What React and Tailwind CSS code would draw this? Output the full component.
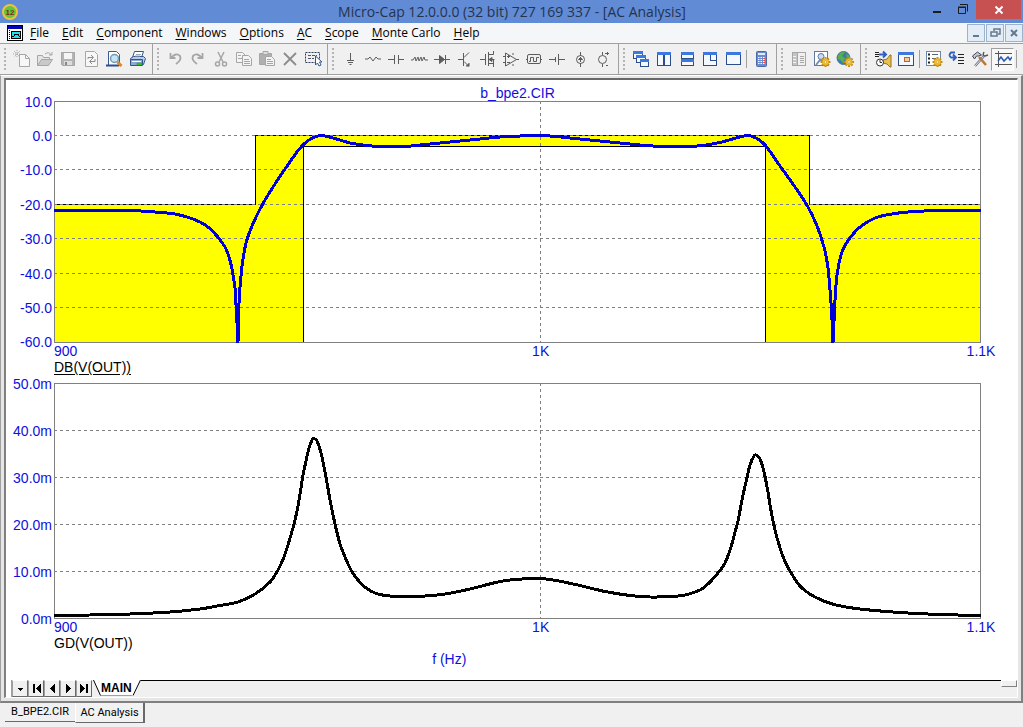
import React, { useState } from 'react'

const MENUS = ['File', 'Edit', 'Component', 'Windows', 'Options', 'AC', 'Scope', 'Monte Carlo', 'Help']

// 18x18 drawings for the tool bar
const G = '#a6a6a6'
const D = '#5c5c5c'
const B = '#2f5fc0'
const gear = (x, y) => (
  <g stroke="#c08c14" fill="#f5c63c">
    <path d={`M${x - 5} ${y}h10M${x} ${y - 5}v10M${x - 3.5} ${y - 3.5}l7 7M${x + 3.5} ${y - 3.5}l-7 7`} strokeWidth="2" />
    <circle cx={x} cy={y} r="3.2" stroke="#e0a820" strokeWidth="1" />
    <circle cx={x} cy={y} r="1.3" fill="#fff8dc" strokeWidth=".6" />
  </g>
)
const win = (x, y, w, h) => (
  <g shapeRendering="crispEdges">
    <rect x={x + 0.5} y={y + 0.5} width={w - 1} height={h - 1} fill="#f4f8ff" stroke="#2c4c8c" />
    <path d={`M${x} ${y + 1.5}h${w}`} stroke="#3c78e0" strokeWidth="3" />
  </g>
)

const ICONS = {
  New: <g stroke={G} fill="#f7f7f7"><path d="M6.5 4.5h6l4 4v8h-10z" /><path d="M12.5 4.5v4h4" fill="none" /><path d="M1 1l6 6M7 1L1 7M4 0v8M0 4h8" strokeDasharray="1 1" fill="none" /></g>,
  Open: <g stroke={G} fill="#e4e4e4"><path d="M1.5 15.5v-10h5l1 2h6v3" /><path d="M1.5 15.5l4-6h11l-4 6z" fill="#c9c9c9" /><path d="M9 4q4-3 6 1M16 2v3h-3" fill="none" /></g>,
  Save: <g stroke={G} fill="#b4b4b4"><path d="M2.5 2.5h13v13h-12l-1-1z" /><rect x="5" y="3" width="8" height="6" fill="#f5f5f5" stroke="none" /><rect x="5" y="11" width="8" height="4" fill="#dcdcdc" stroke="none" /><rect x="6" y="12" width="2" height="3" fill="#888" stroke="none" /></g>,
  Revert: <g stroke={G} fill="#f7f7f7"><path d="M3.5 1.5h9l3 3v12h-12z" /><path d="M6 9V7.5h5M9 5l2.5 2.5L9 10M13 9v2.5H8M10 9l-2.5 2.5L10 14" fill="none" stroke="#8c8c8c" /></g>,
  Preview: <g><path d="M3.5 1.5h8l3 3v11h-11z" fill="#fff" stroke="#3a5a96" /><path d="M1 15.5h13" stroke="#2c4c8c" strokeWidth="2" /><circle cx="9.5" cy="8.5" r="4" fill="#c4e4f8" stroke="#7c98ac" strokeWidth="1.5" /><path d="M12.5 12l4 4" stroke="#d88a2c" strokeWidth="3" /></g>,
  Print: <g stroke="#34548c"><path d="M6.5 1.5h9l-2 6h-9z" fill="#fff" /><path d="M2.5 8.5l3-2h10l2 2-2 6h-13z" fill="#b8cce8" /><path d="M2.5 9.5h12v6h-12z" fill="#8ca8d0" /><path d="M4 11.5h9" stroke="#fff" /><path d="M8 4.500h5M7 6h5" stroke="#9ab" /><path d="M9 13h5v2H9z" fill="#30d030" stroke="#208c20" strokeWidth=".5" /></g>,
  Undo: <path d="M4.5 3v5h5M5 8q5-6 9-2 2 4-4 8" fill="none" stroke={G} strokeWidth="1.8" />,
  Redo: <path d="M13.5 3v5h-5M13 8Q8 2 4 6q-2 4 4 8" fill="none" stroke={G} strokeWidth="1.8" />,
  Cut: <g fill="none" stroke={G} strokeWidth="1.5"><path d="M6 2l5 10M12 2L7 12" /><circle cx="5.5" cy="14" r="2" /><circle cx="12.5" cy="14" r="2" /></g>,
  Copy: <g stroke={G} fill="#f4f4f4"><path d="M1.5 2.5h6l3 3v7h-9z" /><path d="M7.5 5.5h6l3 3v7h-9z" /><path d="M3 5.5h3M3 8.5h4M9 9.5h5M9 11.5h6M9 13.5h6" /></g>,
  Paste: <g stroke={G}><path d="M1.5 3.5h12v11h-12z" fill="#b0b0b0" /><path d="M5 1.5h5v3H5z" fill="#ddd" /><path d="M7.5 6.5h6l3 3v6h-9z" fill="#f4f4f4" /><path d="M9 9.5h4M9 11.5h6M9 13.5h6" /></g>,
  Delete: <path d="M3 3l12 12M15 3L3 15" stroke="#8c8c8c" strokeWidth="1.8" />,
  Select: <g><path d="M1.5 2.5h14v10h-14z" fill="none" stroke="#2c3c5c" strokeDasharray="2 1" /><path d="M4 5.5h9M4 8.5h6" stroke="#556" strokeDasharray="3 1" /><path d="M11.5 6v9l2-2 1.500 3 2-1-1.500-3h2.500z" fill="#fff" stroke="#34548c" /></g>,
  Ground: <path d="M9.5 3v7M6 10.5h7M7 12.5h5M8.5 14.5h2" stroke={D} />,
  Resistor: <path d="M1 9h3l2-2 3 4 3-4 2 2h3" fill="none" stroke={D} />,
  Capacitor: <path d="M1 9.5h6.5M7.5 5v9M11.5 5v9M11.5 9.5H17" fill="none" stroke={D} />,
  Inductor: <path d="M1 10h2l2-3 1 4 2-4 1 4 2-4 1 4 2-4 1 3h3" fill="none" stroke={D} />,
  Diode: <g stroke={D}><path d="M1 9.5h16M12.5 5v9" /><path d="M6.5 5.5v8l5-4z" fill={D} /></g>,
  Bipolar: <g stroke={D} fill="none"><path d="M2 9.5h5M7.5 3v13M8 7.5l5-5M8 11.5l5 5" /><path d="M10 16h3v-3" fill={D} /></g>,
  Mosfet: <g stroke={D} fill="none"><path d="M1 9.5h5M6.5 4v11M9.5 2v14M9.5 4.5h5V1M9.5 9.5h6M9.5 13.5h5V17M14.5 9v5" /><path d="M10 9.5l3-2v4z" fill={D} /></g>,
  Opamp: <g stroke={D} fill="none"><path d="M3.5 3v13l11-6.5zM14 9.5h3M1 6.5h3M1 12.5h3" /><path d="M5 6.5h3M6.5 5v3M5 12.5h3M11 5V3M11 14v2" /></g>,
  Pulse: <g stroke={D} fill="none"><rect x="2.5" y="4.5" width="13" height="9" rx="1.5" /><path d="M1 9.5h2M15 9.5h2M4 11.5h1.5v-4h3v4h3v-4H14" /></g>,
  Battery: <path d="M1 9.5h6.5M7.5 7v5M10.5 4v11M10.5 9.5H17" fill="none" stroke={D} />,
  Isource: <g stroke={D} fill="none"><circle cx="9.5" cy="9.5" r="4" /><path d="M9.5 2v4M9.5 13v4M9.5 7v5" /><path d="M7.5 9.5l2-2 2 2z" fill={D} /></g>,
  Vsource: <g stroke={D} fill="none"><circle cx="8.5" cy="9.5" r="4" /><path d="M8.5 2v3M8.5 14v3M11 3.5h4M13.5 2v3M12 15.5h2" /></g>,
  Cascade: <g>{win(1, 1, 10, 8)}{win(4, 5, 10, 8)}{win(8, 9, 9, 8)}</g>,
  'Tile vertical': <g>{win(2, 2, 7, 14)}{win(9, 2, 7, 14)}</g>,
  'Tile horizontal': <g>{win(3, 2, 13, 7)}{win(3, 9, 13, 7)}</g>,
  Overlap: <g>{win(2, 2, 14, 14)}{win(9, 2, 7, 9)}</g>,
  Maximize: win(2, 2, 15, 13),
  Calculator: <g><rect x="4.5" y="1.5" width="10" height="15" rx="1" fill="#6c8cd0" stroke="#4c68a8" /><path d="M6 4h7" stroke="#dcecff" strokeWidth="2" /><path d="M6 7.5h7M6 9.5h7M6 11.5h7M6 13.5h7" stroke="#fff" strokeDasharray="1.5 1" /><path d="M12.500 8v6" stroke="#e04848" strokeDasharray="1 1" /></g>,
  Panel: <g stroke={G} fill="#f0f0f0"><rect x="2.5" y="2.5" width="13" height="13" /><path d="M3 3h4v12H3z" fill="#c4c4c4" stroke="none" /><path d="M7.5 3v12" /><path d="M3 6.5h3M3 9.5h3M3 12.5h3" stroke="#f4f4f4" /><path d="M10 6.5h4M10 8.5h4M10 10.5h4M10 12.5h4" /></g>,
  'Component editor': <g><rect x="1.5" y="1.5" width="13" height="14" fill="#fff" stroke="#667898" /><circle cx="8" cy="6.500" r="3" fill="#c8daf4" stroke="#5878a8" /><path d="M3 15l4-5 3 1" fill="none" stroke="#7a90b0" strokeWidth="2" />{gear(12.500, 12)}</g>,
  Web: <g><circle cx="7.5" cy="8" r="6.500" fill="#3c78b8" stroke="#4c7890" /><path d="M2 6q3-5 7-4l-3 4 3 2-2 6q-1-4-5-5zM10 4l4 2-3 3z" fill="#58b048" />{gear(13, 12)}</g>,
  Stepping: <g><path d="M1 2.5h4M1 4.500h4M1 6.5h4" stroke="#222" /><path d="M5 4.500h6M9 1.500l3 3-3 3" fill="none" stroke={B} strokeWidth="2" /><path d="M9 10l4-1 3-4h1v12h-1l-3-3-4-1z" fill="#e8c050" stroke="#987020" /><circle cx="6" cy="12.500" r="3.500" fill="#fff" stroke="#333" /><path d="M6 10v2.500h2" fill="none" stroke="#333" /></g>,
  'Analysis window': <g>{win(1, 2, 16, 14)}<rect x="7.5" y="7.5" width="5" height="4" fill="#f8c8a0" stroke="#b06838" /></g>,
  Limits: <g><rect x="1.5" y="1.5" width="14" height="14" fill="#fff" stroke="#6c86b0" /><path d="M3 4.5h2M3 8.5h2M3 12.5h2" stroke="#222" strokeWidth="2" /><path d="M7 4.5h6M7 8.5h4" stroke="#567" />{gear(12.5, 12)}</g>,
  'State variables': <g><path d="M7 2.500H3q-3 3 0 5h4M5 4.500l3 3-3 3" fill="none" stroke={B} strokeWidth="1.800" /><path d="M10 4.5h6M10 7.5h6M10 10.5h6M10 13.5h6" stroke="#222" /></g>,
  Properties: <g fill="none"><path d="M4 16L13 6" stroke="#6c7888" strokeWidth="2.500" /><path d="M4 16L13 6" stroke="#dce4ec" /><path d="M13 2q-2 4 1 4l3-1" stroke="#556" strokeWidth="1.5" /><path d="M8 7l7 8" stroke="#b87838" strokeWidth="2.5" /><path d="M1.500 6l5-4 4 3-3 1-2 0-2 3z" fill="#c4ccd8" stroke="#445" /></g>,
  Scope: <g fill="none"><path d="M4.5 1v16M1 3.5h17M1 14.5h17" stroke="#555" /><path d="M4 11l3-4 3 4 4-4 2 3 2-3" stroke="#2858b8" strokeWidth="1.5" /></g>,
}

const GROUPS = [
  ['New', 'Open', 'Save', 'Revert', 'Preview', 'Print'],
  ['Undo', 'Redo', 'Cut', 'Copy', 'Paste', 'Delete', 'Select'],
  ['Ground', 'Resistor', 'Capacitor', 'Inductor', 'Diode', 'Bipolar', 'Mosfet', 'Opamp', 'Pulse', 'Battery', 'Isource', 'Vsource'],
  ['Cascade', 'Tile vertical', 'Tile horizontal', 'Overlap', 'Maximize', '|', 'Calculator'],
  ['Panel', 'Component editor', 'Web'],
  ['Stepping', 'Analysis window', '|', 'Limits', 'State variables', 'Properties', 'Scope', '|'],
]

// trace samples, in plot units
const DB_TRACE = [
  [0, 109.5], [50, 109.5], [76, 109.5], [101, 111], [121, 113], [136, 117], [146, 121], [154, 126], [163, 135], [171, 146], [175, 156], [178, 168], [181, 187], [182, 204], [183, 222], [183, 241],
  [184, 241], [185, 202], [187, 175], [189, 158], [192, 142], [196, 130], [203, 114], [211, 99], [221, 83], [231, 68], [243, 51], [249, 44], [255, 39], [261, 36], [267, 34.5], [275, 36], [286, 39],
  [296, 42], [313, 44.5], [326, 45.5], [351, 45.5], [371, 43.5], [391, 41.5], [426, 38], [446, 36], [466, 35], [481, 34.5], [496, 35], [521, 37.5], [546, 40], [571, 42.5], [591, 44.5], [611, 45.5],
  [636, 45.5], [652, 44], [668, 41], [682, 37], [694, 34.5], [702, 37], [711, 44], [726, 65], [741, 86], [754, 106], [763, 125], [770, 146], [774, 167], [776, 189], [778, 219], [778, 241],
  [779, 241], [781, 199], [783, 174], [788, 151], [796, 137], [806, 126], [821, 117], [841, 112.5], [861, 110.5], [886, 109.5], [927, 109.5],
]
const GD_TRACE = [
  [0, 232.5], [36, 232], [76, 231], [116, 229], [146, 226], [166, 222.5], [184, 219], [201, 211], [216, 199], [224, 187], [230, 174], [234, 162], [240, 141], [244, 123], [247, 105], [249, 92],
  [252, 78], [255, 65], [258, 57], [260, 55.5], [263, 58], [267, 70], [272, 94], [276, 117], [281, 141], [286, 161], [291, 174], [297, 187], [304, 197], [312, 205], [321, 210], [331, 212.5], [346, 213.5],
  [371, 213], [391, 211], [416, 206], [446, 198.5], [461, 196.5], [479, 195.5], [487, 195.5], [502, 197.5], [526, 202.5], [551, 208.5], [576, 212.5], [596, 214], [618, 213.5], [631, 212], [646, 207],
  [655, 200], [664, 190], [671, 180], [677, 164], [681, 149], [684, 138], [688, 117], [692, 99], [696, 82], [700, 73], [702, 72], [706, 76], [710, 89], [714, 109], [716, 122], [721, 147], [726, 165],
  [730, 176], [736, 188], [746, 203], [761, 214], [780, 221.5], [806, 226], [846, 229.5], [886, 231.5], [927, 232.5],
]

function toPath(pts) {
  let d = `M${pts[0].join(' ')}`
  for (let i = 0; i < pts.length - 1; i++) {
    const a = pts[i - 1] || pts[i], b = pts[i], c = pts[i + 1], e = pts[i + 2] || c
    if (Math.max(b[1], c[1]) > 240) { d += `L${c.join(' ')}`; continue }
    const k = (c[0] - b[0]) / 3
    const m1 = (c[1] - a[1]) / (c[0] - a[0] || 1)
    const m2 = (e[1] - b[1]) / (e[0] - b[0] || 1)
    d += `C${b[0] + k} ${b[1] + m1 * k} ${c[0] - k} ${c[1] - m2 * k} ${c[0]} ${c[1]}`
  }
  return d
}

function Tick({ children }) {
  return <span className="flex w-0 justify-center whitespace-nowrap">{children}</span>
}

function Plot({ labels, heightClass, height, trace, color, title, underline, mask }) {
  const step = (height - 1) / (labels.length - 1)
  return (
    <div className="flex">
      <div className={`flex w-12 shrink-0 flex-col justify-between pr-[2px] text-[#0f0fe0] ${heightClass}`}>
        {labels.map(l => <span key={l} className="flex h-px items-center justify-end">{l}</span>)}
      </div>
      <div className="min-w-0 flex-1">
        <svg className={`block w-full ${heightClass}`} viewBox={`0 0 927 ${height}`} preserveAspectRatio="none" shapeRendering="crispEdges" fill="none">
          {mask && (
            <g>
              <path d="M0 103.5H201.5V34.5H755.5V103.5H927V241H711.5V45.5H249.5V241H0z" fill="#ffff00" />
              <path d="M0 103.5H201.5V34.5H755.5V103.5H927M249.5 241V45.5H711.5V241" stroke="#000" />
            </g>
          )}
          {labels.slice(1, -1).map((l, i) => (
            <path key={l} d={`M0 ${Math.floor((i + 1) * step) + 0.5}H927`} stroke="#808080" strokeDasharray="3 3" />
          ))}
          <path d={`M486.5 0V${height}`} stroke="#808080" strokeDasharray="3 3" />
          <rect x=".5" y=".5" width="926" height={height - 1} stroke="#808080" />
          <path d={toPath(trace)} stroke={color} strokeWidth="3" strokeLinejoin="round" />
        </svg>
        <div className="flex h-4 items-center text-[#0f0fe0]">
          <span className="w-0">900</span>
          <span className="w-[52.5%]" />
          <Tick>1K</Tick>
          <span className="flex-1" />
          <Tick>1.1K</Tick>
        </div>
        <div className="flex h-4 items-center text-black">
          {underline ? <u className="underline-offset-2">{title}</u> : title}
        </div>
      </div>
    </div>
  )
}

function ToolBar() {
  const [scope, setScope] = useState(true)
  return (
    <div className="flex h-8 items-stretch overflow-hidden border-y border-[#a0a0a0] bg-[#f0f0f0]">
      {GROUPS.map((g, gi) => (
        <div key={gi} className={`flex shrink-0 items-center pl-1 ${gi < GROUPS.length - 1 ? 'border-r border-[#a0a0a0]' : ''} ${gi === 1 ? 'pr-[3px]' : 'pr-1'}`}>
          <span className="mr-[3px] h-[22px] w-[3px] border-l-2 border-dotted border-[#b4b4b4]" />
          {g.map((name, i) => name === '|'
            ? <span key={i} className="mx-[2px] h-[18px] w-px bg-[#a0a0a0]" />
            : (
              <button key={i} aria-label={name} onClick={() => name === 'Scope' && setScope(s => !s)}
                className={`flex h-[23px] w-[23px] items-center justify-center ${name === 'Scope' && scope ? 'border border-[#a0a0a0] border-r-white border-b-white bg-[#f8f8f8]' : ''}`}>
                <svg width="18" height="18" viewBox="0 0 18 18" className="shrink-0">{ICONS[name]}</svg>
              </button>
            ))}
        </div>
      ))}
    </div>
  )
}

const NAV = [
  ['Pages', 'M5 7h5l-2.5 3z'],
  ['First', 'M4 3h2v9H4zM12 3v9L7 7.5z'],
  ['Previous', 'M10 3v9L5 7.5z'],
  ['Next', 'M5 3v9l5-4.5z'],
  ['Last', 'M3 3v9l5-4.5zM9 3h2v9H9z'],
]

function SheetTabs() {
  return (
    <div className="mt-auto flex h-[17px] bg-[#f0f0f0]">
      <div className="w-[6px] border-r border-[#a0a0a0] bg-white" />
      {NAV.map(([name, d]) => (
        <button key={name} aria-label={name} className="flex h-[17px] w-[16px] items-center justify-center border border-t-white border-l-[#a0a0a0] border-r-[#696969] border-b-[#696969]">
          <svg width="15" height="15" viewBox="0 0 15 15" className="shrink-0" shapeRendering="crispEdges"><path d={d} /></svg>
        </button>
      ))}
      <svg width="9" height="17" viewBox="0 0 9 17"><path d="M1 0h8v16z" fill="#fff" /><path d="M1.5 0L8.5 15.5" stroke="#000" /></svg>
      <button className="h-4 border-b border-[#a0a0a0] bg-white text-[12px] leading-4 font-bold">MAIN</button>
      <svg width="9" height="17" viewBox="0 0 9 17"><path d="M0 0h8L1 16H0z" fill="#fff" /><path d="M1 15.5L8.5 0" stroke="#000" /></svg>
      <div className="flex-1 border-t border-black" />
      <div className="h-[7px] w-4 border border-t-white border-l-white border-r-[#808080] border-b-[#808080] bg-[#f0f0f0]" />
    </div>
  )
}

export default function App() {
  const [doc, setDoc] = useState('AC Analysis')
  return (
    <div className="flex min-h-screen flex-col bg-[#f0f0f0] font-['Liberation_Sans',Arial,sans-serif] text-[14px] leading-4 text-black">
      {/* Title bar */}
      <header className="flex h-[23px] items-center bg-[#618bd5]">
        <div className="w-[100px] pl-[2px]">
          <svg width="16" height="18" viewBox="0 0 16 18">
            <circle cx="8" cy="9" r="7" fill="#5cc83c" stroke="#f0c040" strokeWidth="2" />
            <text x="8" y="12" textAnchor="middle" fontSize="8" fontWeight="bold" fill="#8c2818">12</text>
          </svg>
        </div>
        <h1 className="flex-1 text-center font-['Open_Sans',sans-serif] text-[14px] text-[#26334d]">
          Micro-Cap 12.0.0.0 (32 bit) 727 169 337 - [AC Analysis]
        </h1>
        <div className="flex h-full items-start pr-[2px]">
          <button aria-label="Minimize" className="flex h-[18px] w-[26px] items-center justify-center">
            <svg width="12" height="12"><path d="M2 9h8" stroke="#1c1c1c" strokeWidth="2" /></svg>
          </button>
          <button aria-label="Restore" className="flex h-[18px] w-[26px] items-center justify-center">
            <svg width="12" height="12" fill="none" stroke="#1c1c1c"><path d="M1.5 4.5h7v6h-7zM1 4h8" /><path d="M3 1.500h7.5v7" /></svg>
          </button>
          <button aria-label="Close" className="flex h-[19px] w-[45px] items-center justify-center bg-[#c75050]">
            <svg width="10" height="10"><path d="M1.5 1.5l7 7M8.5 1.5l-7 7" stroke="#fff" strokeWidth="2" /></svg>
          </button>
        </div>
      </header>

      {/* Menu bar */}
      <nav className="flex h-5 items-center bg-[#f5f6f7] pl-[7px] font-['Open_Sans',sans-serif] text-[12px]">
        <svg width="16" height="16" viewBox="0 0 16 16" shapeRendering="crispEdges" className="mr-[7px]">
          <rect x=".5" y=".5" width="15" height="15" fill="#fff" stroke="#000" />
          <path d="M1 2h14" stroke="#0000b4" strokeWidth="3" />
          <path d="M2.5 5v10" stroke="#000" strokeDasharray="1 1" />
          <rect x="4.5" y="6.5" width="9" height="7" fill="#20e0f0" stroke="#000" />
          <path d="M5 11h2l1-2h3l1 2h1" fill="none" stroke="#000" />
        </svg>
        <div className="flex gap-[13px]">
          {MENUS.map(m => (
            <button key={m} className="whitespace-nowrap"><u className="underline-offset-2">{m[0]}</u>{m.slice(1)}</button>
          ))}
        </div>
        <div className="ml-auto flex gap-px">
          {[['Minimize child', 'M5 11h6'], ['Restore child', 'M4 7h6v4H4zM7 6V4h6v5h-2'], ['Close child', 'M5 5l6 6M11 5l-6 6']].map(([n, d]) => (
            <button key={n} aria-label={n} className="flex h-[18px] w-[18px] items-center justify-center border border-[#9db3c9] bg-[#e3edf8]">
              <svg width="16" height="16" viewBox="0 0 16 16" className="shrink-0"><path d={d} fill="none" stroke="#66788c" strokeWidth={n === 'Restore child' ? 1.5 : 2} /></svg>
            </button>
          ))}
        </div>
      </nav>

      <ToolBar />

      {/* Child window */}
      <main className="flex flex-1 flex-col border-t border-r-2 border-b-2 border-l border-t-white border-r-[#808080] border-b-[#808080] border-l-[#a0a0a0] bg-[#e6e6e6] pt-[2px] pr-[3px] pb-[3px] pl-[3px]">
        <div className="flex flex-1 flex-col border-t-2 border-r border-b border-l-2 border-t-[#696969] border-r-white border-b-white border-l-[#808080] bg-white">
          <section className="flex flex-col pr-[36px]">
            <h2 className="flex h-[21px] items-center justify-center pt-[5px] pl-12 text-[#0f0fe0]">b_bpe2.CIR</h2>
            <Plot labels={['10.0', '0.0', '-10.0', '-20.0', '-30.0', '-40.0', '-50.0', '-60.0']}
              heightClass="h-[242px]" height={242} trace={DB_TRACE} color="#0000dc" title="DB(V(OUT))" underline mask />
            <div className="h-2" />
            <Plot labels={['50.0m', '40.0m', '30.0m', '20.0m', '10.0m', '0.0m']}
              heightClass="h-[236px]" height={236} trace={GD_TRACE} color="#000" title="GD(V(OUT))" />
            <div className="flex h-4 items-center justify-center pr-[14%] pl-12 text-[#0f0fe0]">f (Hz)</div>
          </section>
          <SheetTabs />
        </div>
      </main>

      {/* Open documents */}
      <footer className="flex h-6 items-start pl-[5px] font-['Roboto',sans-serif] text-[11px]">
        {['B_BPE2.CIR', 'AC Analysis'].map(t => (
          <button key={t} onClick={() => setDoc(t)}
            className={`flex w-[70px] items-center justify-center whitespace-nowrap border-b border-[#696969] ${doc === t ? 'h-5 border-r-2 border-l border-l-white bg-[#f2f2f2]' : 'h-[19px]'}`}>
            {t}
          </button>
        ))}
      </footer>
    </div>
  )
}
